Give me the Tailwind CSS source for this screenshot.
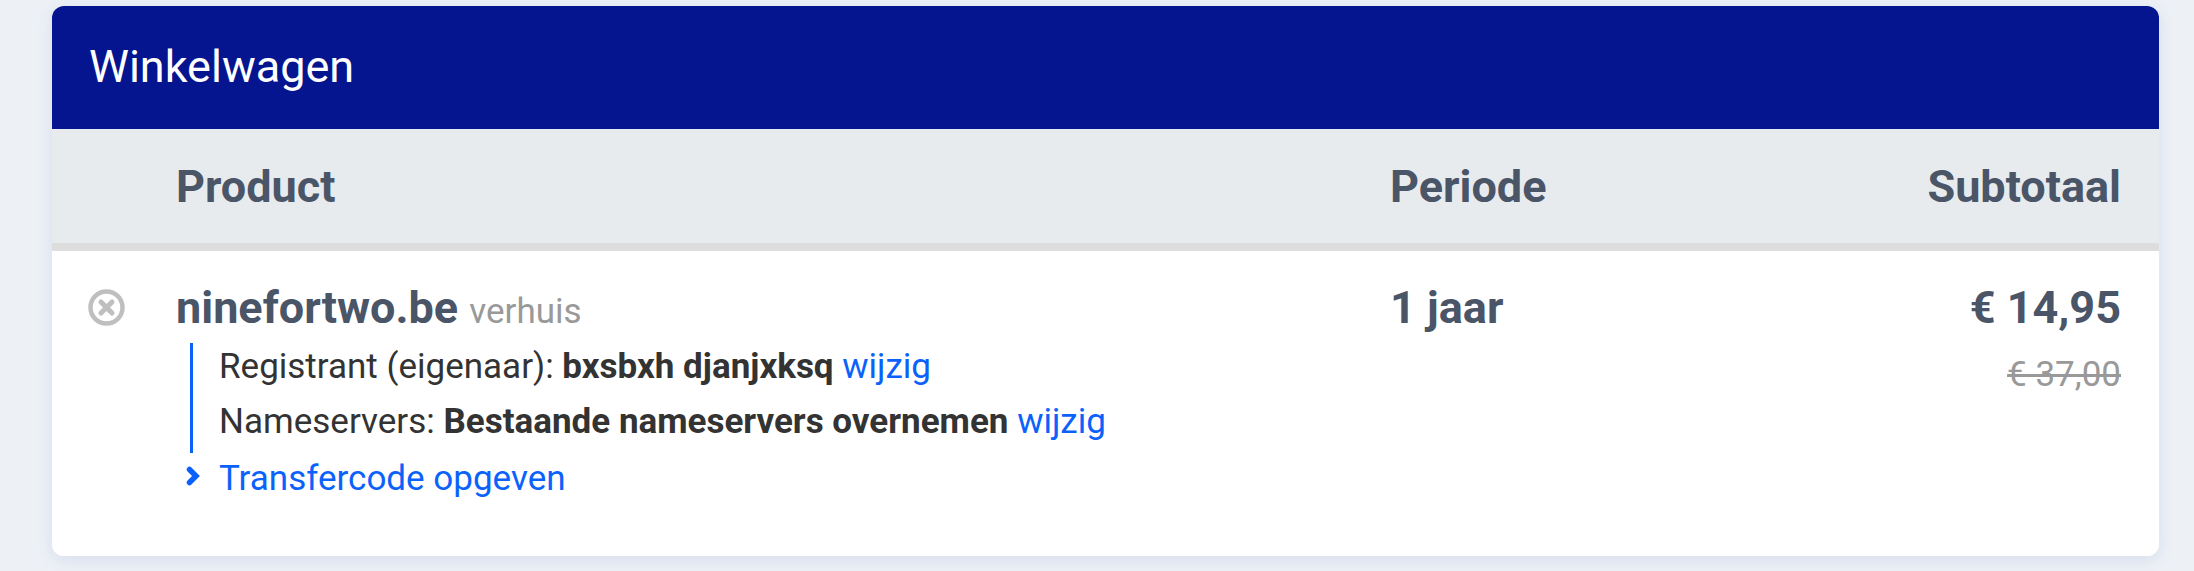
<!DOCTYPE html>
<html lang="nl">
<head>
  <meta charset="UTF-8" />
  <title>Winkelwagen</title>
  <script src="https://cdn.jsdelivr.net/npm/@tailwindcss/browser@4"></script>
</head>
<body class="bg-[#edf1f6] font-['Roboto',sans-serif] h-[571px] overflow-hidden">
  <div class="pt-[6px] pl-[52px] pr-[35px]">
    <div class="rounded-[12px] bg-white shadow-[0_4px_16px_rgba(60,90,170,0.12)]">
      <!-- Titel -->
      <header class="h-[123px] rounded-t-[12px] bg-[#05158f] pl-[37px] pt-[34px] text-[45px] leading-[53px] text-white">Winkelwagen</header>

      <!-- Kolommen -->
      <div class="flex h-[122px] border-b-[8px] border-[#dddddd] bg-[#e8ebee] pt-[31px] text-[45px] leading-[53px] font-bold text-[#4a5568]">
        <div class="w-[124px]"></div>
        <div class="w-[1214px]">Product</div>
        <div class="flex-1">Periode</div>
        <div class="pr-[38px]">Subtotaal</div>
      </div>

      <!-- Regel -->
      <div class="flex h-[305px] rounded-b-[12px] bg-white">
        <div class="w-[124px] pl-[36px] pt-[38px]">
          <svg class="h-[37px] w-[37px]" viewBox="0 0 37 37" fill="none" stroke="#bfbfbf">
            <circle cx="18.5" cy="18.5" r="16" stroke-width="4.5" />
            <path d="M13 13l11 11M24 13l-11 11" stroke-width="5" stroke-linecap="round" />
          </svg>
        </div>
        <div class="w-[1214px] pt-[30px]">
          <div class="text-[45px] leading-[53px] font-bold text-[#4a5568]">ninefortwo.be <span class="text-[35px] font-normal text-[#999999]">verhuis</span></div>
          <div class="ml-[14px] mt-[5px] border-l-[3px] border-[#0b62fb] pl-[26px] text-[35px] leading-[48px] text-[#333333]">
            <div class="h-[55px]">Registrant (eigenaar): <b>bxsbxh djanjxksq</b> <a class="text-[#0b62fb]">wijzig</a></div>
            <div class="h-[55px]">Nameservers: <b>Bestaande nameservers overnemen</b> <a class="text-[#0b62fb]">wijzig</a></div>
          </div>
          <div class="flex items-center text-[35px] leading-[52px] text-[#0b62fb]">
            <svg class="ml-[10px] mr-[18px] mb-[6px] h-[20px] w-[15px]" viewBox="0 0 15 20" fill="none" stroke="#0b62fb" stroke-width="5.5" stroke-linecap="round" stroke-linejoin="miter">
              <path d="M3.5 3.5L10 10l-6.5 6.5" />
            </svg>
            <a>Transfercode opgeven</a>
          </div>
        </div>
        <div class="flex-1 pt-[30px] text-[45px] leading-[53px] font-bold text-[#4a5568]">1 jaar</div>
        <div class="pr-[38px] pt-[30px] text-right">
          <div class="text-[45px] leading-[53px] font-bold text-[#4a5568]">€ 14,95</div>
          <div class="mt-[20px] text-[35px] leading-[41px] text-[#999999] line-through decoration-[3px]">€ 37,00</div>
        </div>
      </div>
    </div>
  </div>
</body>
</html>
